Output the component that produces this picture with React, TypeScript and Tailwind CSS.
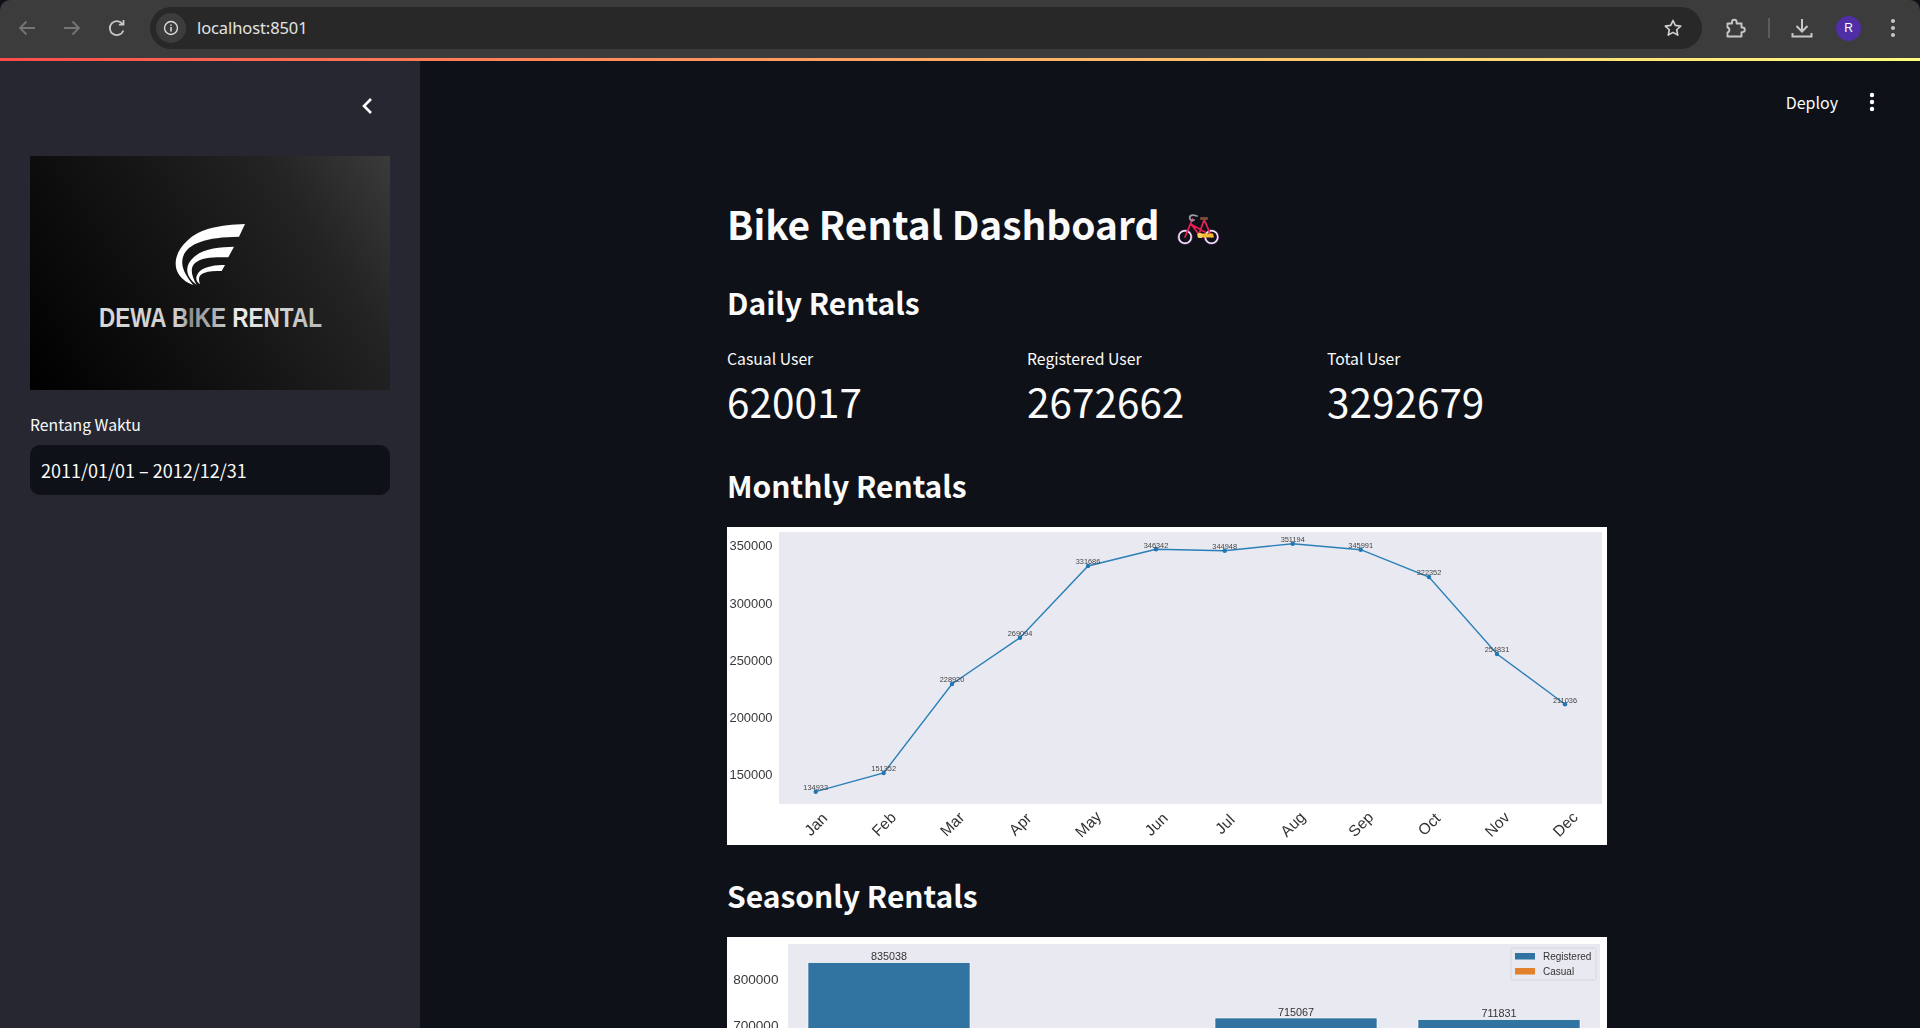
const months = [
  ["Jan", 815.7, 791.7, "134933"], ["Feb", 883.7, 773, "151352"], ["Mar", 952, 684, "228920"], ["Apr", 1020, 637.7, "269094"],
  ["May", 1088, 566, "331686"], ["Jun", 1156, 549.3, "346342"], ["Jul", 1224.7, 550.7, "344948"], ["Aug", 1292.7, 543.7, "351194"],
  ["Sep", 1360.7, 549.7, "345991"], ["Oct", 1429, 577, "322352"], ["Nov", 1497, 654, "254831"], ["Dec", 1565, 704.3, "211036"],
] as const;
const ticks = [["350000", 545.7], ["300000", 603], ["250000", 660], ["200000", 717.3], ["150000", 774.7]] as const;

function LineChart() {
  return (
    <svg viewBox="727 527 880 318" className="block w-[880px] h-[318px] blur-[0.3px]" fontFamily="'Liberation Sans', sans-serif">
      <rect x="727" y="527" width="880" height="318" fill="#fff" />
      <rect x="779" y="532" width="823" height="272" fill="#e9e9f1" />
      {ticks.map(([t, y]) => (
        <text key={t} x="772.5" y={y + 4.6} textAnchor="end" fontSize="12.9" fill="#3a3a3a">{t}</text>
      ))}
      <polyline points={months.map((m) => `${m[1]},${m[2]}`).join(" ")} fill="none" stroke="#2b7fb8" strokeWidth="1.4" />
      {months.map((m) => (
        <g key={m[0]}>
          <circle cx={m[1]} cy={m[2]} r="2.2" fill="#1f77b4" />
          <text x={m[1]} y={m[2] - 1.8} textAnchor="middle" fontSize="7.4" fill="#444">{m[3]}</text>
          <text x={m[1]} y={829.5} textAnchor="middle" fontSize="15.5" fill="#333" transform={`rotate(-45 ${m[1]} 824)`}>{m[0]}</text>
        </g>
      ))}
    </svg>
  );
}

function BarChart() {
  const bars = [[808, 962.7, "835038"], [1215, 1018, "715067"], [1418, 1019.7, "711831"]] as const;
  return (
    <svg viewBox="727 937 880 318" className="block w-[880px] h-[318px] blur-[0.3px]" fontFamily="'Liberation Sans', sans-serif">
      <rect x="727" y="937" width="880" height="318" fill="#fff" />
      <rect x="788" y="944" width="812" height="300" fill="#e9e9f1" />
      <text x="778.5" y="984.3" textAnchor="end" fontSize="13.6" fill="#3a3a3a">800000</text>
      <text x="778.5" y="1030" textAnchor="end" fontSize="13.6" fill="#3a3a3a">700000</text>
      {bars.map(([x, y, l]) => (
        <g key={l}>
          <rect x={x} y={y} width="162" height={1244 - y} fill="#3274a1" stroke="#fff" strokeWidth="0.6" />
          <text x={x + 81} y={y - 2.5} textAnchor="middle" fontSize="10.8" fill="#333">{l}</text>
        </g>
      ))}
      <rect x="1511" y="948" width="85" height="32" rx="2" fill="#e9e9f1" stroke="#d0d0d6" strokeWidth="0.8" />
      <rect x="1515" y="953" width="20" height="6.5" fill="#3274a1" />
      <rect x="1515" y="968" width="20" height="6.5" fill="#e1812c" />
      <text x="1543" y="960" fontSize="10" fill="#333">Registered</text>
      <text x="1543" y="975" fontSize="10" fill="#333">Casual</text>
    </svg>
  );
}

function Logo() {
  return (
    <svg viewBox="0 0 360 234" className="block w-[360px] h-[234px]">
      <defs>
        <linearGradient id="logobg" gradientUnits="userSpaceOnUse" x1="0" y1="234" x2="360" y2="0">
          <stop offset="0" stopColor="#000" />
          <stop offset="0.45" stopColor="#141414" />
          <stop offset="0.75" stopColor="#232323" />
          <stop offset="1" stopColor="#3a3a3a" />
        </linearGradient>
        <linearGradient id="logotext" x1="0" x2="1" y1="0" y2="0">
          <stop offset="0" stopColor="#d8d8d8" />
          <stop offset="0.36" stopColor="#cfcfcf" />
          <stop offset="0.41" stopColor="#8f8f8f" />
          <stop offset="0.56" stopColor="#c0c0c0" />
          <stop offset="0.62" stopColor="#eeeeee" />
          <stop offset="1" stopColor="#b8b8b8" />
        </linearGradient>
      </defs>
      <rect width="360" height="234" fill="url(#logobg)" />
      <path fill="#fff" d="M215 68 C190 69 170 72 157 85 C146 95 143 108 148 117 C152 124 158 127 163.3 129 C156 120 150 111 153 101 C157 88 175 81 209 80.7 Z" />
      <path fill="#fff" d="M204 90.7 C190 91 174 92 164 101 C155 109 154 119 166.7 129 C161 119 160 112 165 107 C172 101 185 101 198.3 101.3 Z" />
      <path fill="#fff" d="M195 109 C186 109 176 110 170 115 C165 120 165 125 170 128.3 C168 122 169 119 174 117 C179 115 185 115 191.7 115 Z" />
      <text x="69" y="171" fontFamily="'Liberation Sans', sans-serif" fontWeight="700" fontSize="27" textLength="223" lengthAdjust="spacingAndGlyphs" fill="url(#logotext)">DEWA BIKE RENTAL</text>
    </svg>
  );
}

function BikeEmoji() {
  return (
    <svg viewBox="0 0 46 40" className="w-[46px] h-[40px] shrink-0 mt-[14px]">
      <circle cx="8" cy="27" r="6.5" fill="none" stroke="#8a4a9c" strokeWidth="2.2" />
      <circle cx="8" cy="27" r="6.2" fill="none" stroke="#f4eef6" strokeWidth="1.4" />
      <circle cx="34.5" cy="27" r="6.5" fill="none" stroke="#8a4a9c" strokeWidth="2.2" />
      <circle cx="34.5" cy="27" r="6.2" fill="none" stroke="#f4eef6" strokeWidth="1.4" />
      <path d="M8 27 L15.5 9 M13.5 14 L28 22 M27.5 9 L22 24 M27 9 L34.5 27 M14 14 L24 27" fill="none" stroke="#ea1e55" strokeWidth="1.8" strokeLinecap="round" />
      <path d="M20 6 C14 4 12 6 13 9 C13.5 10.5 15 11 17 10" fill="none" stroke="#9a9aa4" strokeWidth="1.8" strokeLinecap="round" />
      <rect x="23" y="7" width="8" height="3" rx="1.2" fill="#7b4a3a" />
      <path d="M20 23.5 H36 L37 27.5 H22 Z" fill="#f5b82e" />
      <circle cx="23" cy="25.5" r="2.6" fill="#f7cf5a" />
    </svg>
  );
}

function Metric({ label, value }: { label: string; value: string }) {
  return (
    <div className="w-[300px] shrink-0">
      <div className="text-[15.75px] leading-[24px] text-[#fafafa]">{label}</div>
      <div className="text-[40.5px] leading-[60px] text-[#fafafa]">{value}</div>
    </div>
  );
}

function H2({ children, className }: { children: string; className: string }) {
  return <h2 className={"text-[30px] leading-[44px] font-bold text-[#fafafa] " + className}>{children}</h2>;
}

export default function App() {
  return (
    <div className="w-[1920px] h-[1028px] overflow-hidden flex flex-col bg-[#0e1117] font-['Noto_Sans_CJK_JP',sans-serif]">
      <header className="h-[58px] shrink-0 bg-[#3c3c3c] rounded-t-[10px] flex items-center pb-[2px] pl-[15px] pr-[16px] text-[#c7c7c7]">
        <div className="flex items-center gap-[21px] text-[#757575]">
          <svg viewBox="0 0 24 24" className="w-[24px] h-[24px]" fill="none" stroke="currentColor" strokeWidth="1.8"><path d="M20 12H5M11.5 5.5 5 12l6.5 6.5" /></svg>
          <svg viewBox="0 0 24 24" className="w-[24px] h-[24px]" fill="none" stroke="currentColor" strokeWidth="1.8"><path d="M4 12h15M12.5 5.5 19 12l-6.5 6.5" /></svg>
          <svg viewBox="0 0 24 24" className="w-[24px] h-[24px] text-[#c7c7c7]" fill="none" stroke="currentColor" strokeWidth="1.8"><path d="M18.4 14.5a7 7 0 1 1-.9-6.5M18.500 4v4.600h-4.600" /></svg>
        </div>
        <div className="ml-[21px] w-[1552px] h-[42px] rounded-full bg-[#282828] flex items-center pl-[6px] pr-[18px]">
          <div className="w-[30px] h-[30px] rounded-full bg-[#3c3c3c] flex items-center justify-center">
            <svg viewBox="0 0 20 20" className="w-[18px] h-[18px]" fill="none" stroke="#dcdcdc" strokeWidth="1.5"><circle cx="10" cy="10" r="7.2" /><path d="M10 9v5M10 6v1.6" strokeWidth="1.7" /></svg>
          </div>
          <span className="ml-[11px] text-[16.5px] text-[#e3e3e3] font-['Noto_Sans',sans-serif] tracking-[-0.1px]">localhost:8501</span>
          <svg viewBox="0 0 24 24" className="ml-auto w-[22px] h-[22px]" fill="none" stroke="#d0d0d0" strokeWidth="1.8" strokeLinejoin="round"><path d="m12 3.8 2.5 5.4 5.9.7-4.4 4 1.2 5.8L12 16.8l-5.2 2.9L8 13.9l-4.4-4 5.9-.7z" /></svg>
        </div>
        <svg viewBox="0 0 24 24" className="ml-[21px] w-[24px] h-[24px]" fill="none" stroke="#c7c7c7" strokeWidth="1.9" strokeLinejoin="round"><path d="M4.500 7.500H9V6a2.300 2.300 0 0 1 4.600 0v1.500h4.900v4h1a2.300 2.300 0 0 1 0 4.600h-1v4.400h-14v-4c2.500-.5 2.500-4.500 0-5z" /></svg>
        <div className="ml-[21px] w-[2px] h-[20px] bg-[#5c5c5c]" />
        <svg viewBox="0 0 24 24" className="ml-[20px] w-[24px] h-[24px]" fill="none" stroke="#c7c7c7" strokeWidth="2"><path d="M12 3v12M6.5 10l5.500 5.500 5.500-5.500M2.500 17v3.500h19V17" /></svg>
        <div className="ml-[22px] w-[25px] h-[25px] rounded-full bg-[#4f2ea6] flex items-center justify-center text-[12px] text-white font-['Liberation_Sans',sans-serif]">R</div>
        <svg viewBox="0 0 4 20" className="ml-[30px] w-[4px] h-[20px]" fill="#c7c7c7"><circle cx="2" cy="3" r="2" /><circle cx="2" cy="10" r="2" /><circle cx="2" cy="17" r="2" /></svg>
      </header>
      <div className="h-[3px] shrink-0 bg-gradient-to-r from-[#ff4b4b] to-[#fffd80]" />
      <div className="flex flex-1 min-h-0">
        <aside className="w-[420px] shrink-0 bg-[#262730] px-[30px] flex flex-col">
          <div className="h-[95px] flex justify-end items-start pt-[35px] pr-[17px]">
            <svg viewBox="0 0 12 20" className="w-[12px] h-[20px]" fill="none" stroke="#fff" strokeWidth="2.6"><path d="M10 3 3 10l7 7" /></svg>
          </div>
          <Logo />
          <label className="mt-[23px] text-[15.75px] leading-[24px] text-[#fafafa]">Rentang Waktu</label>
          <div className="mt-[8px] h-[50px] rounded-[10px] bg-[#0e1117] flex items-center px-[11px] text-[18px] text-[#fafafa]">2011/01/01 – 2012/12/31</div>
        </aside>
        <main className="flex-1 flex flex-col min-w-0">
          <div className="h-[84px] shrink-0 flex items-center justify-end pb-[2px] pr-[45px] text-[#fafafa]">
            <span className="text-[16px]">Deploy</span>
            <svg viewBox="0 0 6 20" className="ml-[31px] w-[6px] h-[20px]" fill="#fff"><circle cx="3" cy="3" r="2.2" /><circle cx="3" cy="10" r="2.2" /><circle cx="3" cy="17" r="2.2" /></svg>
          </div>
          <div className="pl-[307px] w-[1187px]">
            <div className="mt-[43px] flex items-center gap-[18px]">
              <h1 className="text-[38.8px] leading-[70px] font-bold text-[#fafafa]">Bike Rental Dashboard</h1>
              <BikeEmoji />
            </div>
            <H2 className="mt-[22px]">Daily Rentals</H2>
            <div className="mt-[23px] flex">
              <Metric label="Casual User" value="620017" />
              <Metric label="Registered User" value="2672662" />
              <Metric label="Total User" value="3292679" />
            </div>
            <H2 className="mt-[32px]">Monthly Rentals</H2>
            <div className="mt-[20px]"><LineChart /></div>
            <H2 className="mt-[28px]">Seasonly Rentals</H2>
            <div className="mt-[20px]"><BarChart /></div>
          </div>
        </main>
      </div>
    </div>
  );
}
